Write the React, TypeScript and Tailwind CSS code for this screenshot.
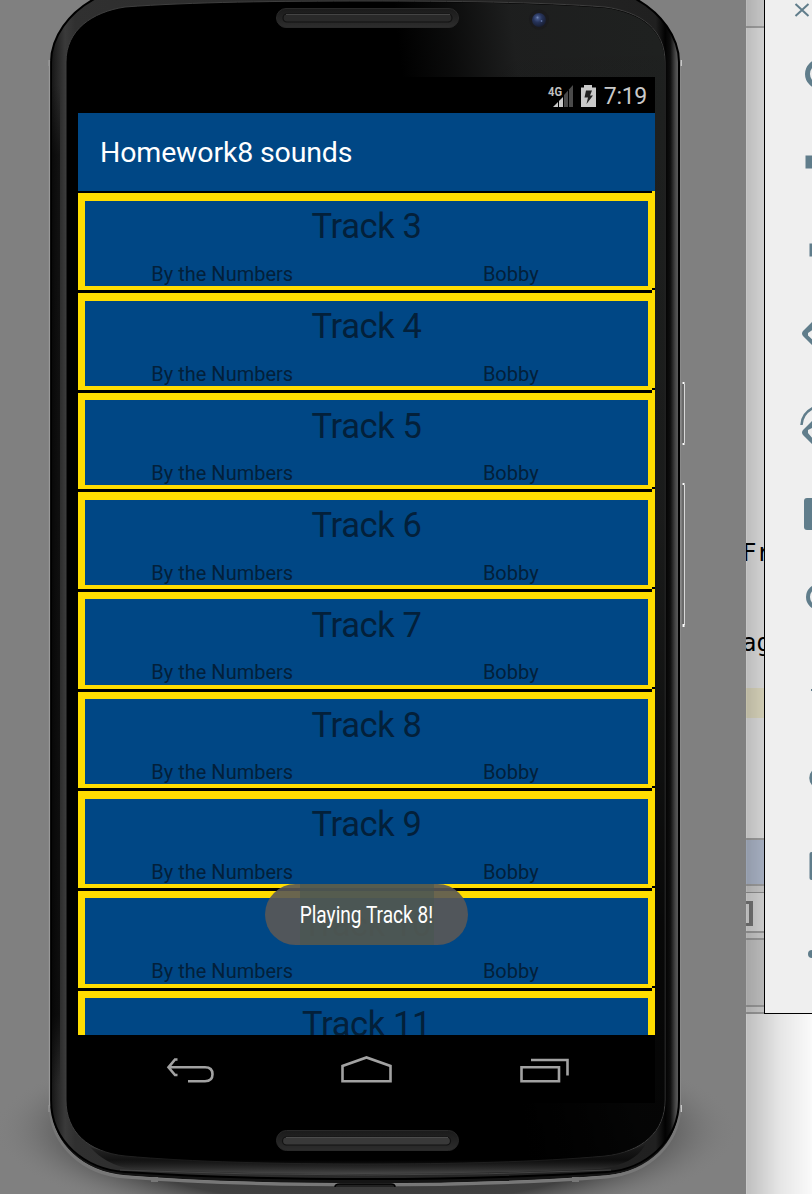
import React from "react";

const tracks = [3, 4, 5, 6, 7, 8, 9, 10, 11];

function PhoneBody() {
  return (
    <svg className="absolute left-0 top-0" width="746" height="1194" viewBox="0 0 746 1194">
      <defs>
        <linearGradient id="rim" x1="50" x2="681" y1="0" y2="0" gradientUnits="userSpaceOnUse">
          <stop offset="0" stopColor="#111" />
          <stop offset="0.008" stopColor="#202020" />
          <stop offset="0.024" stopColor="#3a3a3a" />
          <stop offset="0.04" stopColor="#303030" />
          <stop offset="0.96" stopColor="#202020" />
          <stop offset="0.975" stopColor="#020202" />
          <stop offset="0.983" stopColor="#0e0e0e" />
          <stop offset="0.992" stopColor="#4d4d4d" />
          <stop offset="0.997" stopColor="#606060" />
          <stop offset="1" stopColor="#555" />
        </linearGradient>
        <linearGradient id="blotch" x1="0" x2="0" y1="0" y2="1">
          <stop offset="0" stopColor="#000" stopOpacity="0" />
          <stop offset="0.07" stopColor="#000" stopOpacity="0.6" />
          <stop offset="0.93" stopColor="#000" stopOpacity="0.7" />
          <stop offset="1" stopColor="#000" stopOpacity="0" />
        </linearGradient>
        <linearGradient id="glossX" x1="400" x2="655" y1="60" y2="30" gradientUnits="userSpaceOnUse">
          <stop offset="0" stopColor="#1f2020" stopOpacity="0" />
          <stop offset="0.2" stopColor="#1f2020" stopOpacity="0.35" />
          <stop offset="0.45" stopColor="#1f2020" stopOpacity="0.95" />
          <stop offset="1" stopColor="#1f2120" />
        </linearGradient>
        <linearGradient id="glossFade" x1="0" x2="0" y1="0" y2="1">
          <stop offset="0" stopColor="#000" stopOpacity="0" />
          <stop offset="0.45" stopColor="#000" stopOpacity="0.15" />
          <stop offset="0.8" stopColor="#000" stopOpacity="0.75" />
          <stop offset="1" stopColor="#000" stopOpacity="0.85" />
        </linearGradient>
        <linearGradient id="slot" x1="0" x2="0" y1="0" y2="1">
          <stop offset="0" stopColor="#1b1b1b" />
          <stop offset="0.5" stopColor="#232323" />
          <stop offset="1" stopColor="#2d2d2d" />
        </linearGradient>
        <radialGradient id="lens" cx="0.4" cy="0.35" r="0.7">
          <stop offset="0" stopColor="#50659a" />
          <stop offset="0.45" stopColor="#26335a" />
          <stop offset="1" stopColor="#161b2c" />
        </radialGradient>
        <radialGradient id="shadow" cx="0.5" cy="0.5" r="0.5">
          <stop offset="0" stopColor="#2a2a2a" />
          <stop offset="0.72" stopColor="#3a3a3a" stopOpacity="0.9" />
          <stop offset="0.86" stopColor="#555" stopOpacity="0.4" />
          <stop offset="1" stopColor="#808080" stopOpacity="0" />
        </radialGradient>
        <linearGradient id="bottomRim" x1="0" x2="0" y1="1140" y2="1176" gradientUnits="userSpaceOnUse">
          <stop offset="0" stopColor="#000" stopOpacity="0" />
          <stop offset="0.55" stopColor="#000" stopOpacity="0.6" />
          <stop offset="1" stopColor="#555" />
        </linearGradient>
      </defs>
      <ellipse cx="366" cy="1130" rx="372" ry="104" fill="url(#shadow)" />
      <path d="M50 62V1108C52 1144 82 1172 125 1176C200 1182 280 1184 366 1184C452 1184 530 1182 607 1176C650 1172 678 1144 680 1108V62" fill="#151515" stroke="#8c8c8c" strokeWidth="1.6" />
      <path d="M50 1108C52 1144 82 1174 125 1177C200 1183 280 1185 366 1185C452 1185 530 1183 607 1177C650 1172 678 1144 680 1108" fill="none" stroke="#777" strokeWidth="3" />
      <path d="M51 62C51 38 68 12 98 -3H632C662 12 679 38 679 62V1100C679 1142 645 1169 607 1172C530 1177 452 1179 366 1179C280 1179 200 1177 125 1172C85 1169 51 1142 51 1100Z" fill="url(#rim)" stroke="#000" strokeWidth="2" />
      <rect x="52" y="85" width="8" height="1000" fill="url(#blotch)" />
      <path d="M66 62C66 30 92 12 125 7C190 2 280 1 366 1C452 1 540 2 605 7C642 12 665 30 665 62V1100C665 1132 642 1152 605 1156C540 1162 452 1164 366 1164C280 1164 190 1162 125 1156C88 1152 66 1132 66 1100Z" fill="#000" stroke="#3f3f3f" strokeWidth="1" />
      <path d="M370 2C452 2 540 3 605 8C642 13 664.500 31 664.500 62V1100C664.500 1132 642 1151 605 1155C540 1160 452 1162 370 1162Z" fill="url(#glossX)" />
      <path d="M370 2C452 2 540 3 605 8C642 13 664.500 31 664.500 62V1100C664.500 1132 642 1151 605 1155C540 1160 452 1162 370 1162Z" fill="url(#glossFade)" />
      <path d="M90 1147Q110 1154 150 1156Q366 1163 585 1156Q625 1154 645 1145Q635 1164 600 1169Q366 1179 130 1169Q105 1164 90 1147Z" fill="url(#bottomRim)" />
      <path d="M120 1170Q366 1180 611 1170" fill="none" stroke="#444" strokeWidth="1" />
      <path d="M49.500 60V1106M49 60v6M49 1105v7" stroke="#999" strokeWidth="1.200" />
      <path d="M681.300 60v6M681.300 1105v7" stroke="#ccc" strokeWidth="1.300" />
      <g>
        <rect x="276.500" y="8.500" width="182" height="19" rx="9.500" fill="url(#slot)" stroke="#292929" />
        <rect x="283" y="14" width="169" height="8" rx="4" fill="#292929" stroke="#121212" strokeWidth="1.200" />
        <path d="M286 14.500H450" stroke="#444" />
        <rect x="276.500" y="1130.500" width="182" height="20" rx="10" fill="url(#slot)" stroke="#292929" />
        <rect x="282.500" y="1137" width="168" height="8" rx="4" fill="#393939" stroke="#121212" strokeWidth="1.200" />
        <path d="M286 1137.500H448" stroke="#4c4c4c" />
      </g>
      <circle cx="539" cy="19.500" r="10" fill="#1b1b1d" />
      <circle cx="539" cy="20" r="7" fill="url(#lens)" />
      <circle cx="537.500" cy="17.500" r="1" fill="#6f83b0" />
      <circle cx="541.500" cy="21" r="0.900" fill="#5d70a0" />
      <path d="M683 382V445M683 483V627" stroke="#6b6b6b" strokeWidth="2" />
      <path d="M684.500 384V443M684.500 485V625" stroke="#d8d8d8" strokeWidth="1" />
      <path d="M683.500 382v2M683.500 443v2M683.500 483v2M683.500 624v3" stroke="#fff" strokeWidth="2" />
      <path d="M335 1187Q335 1184 340 1184H391Q395 1184 395 1187" fill="#222" stroke="#000" strokeWidth="1.500" />
      <rect x="151" y="1177" width="7" height="5" fill="#777" />
      <rect x="572" y="1177" width="7" height="5" fill="#777" />
    </svg>
  );
}

function StatusBar() {
  return (
    <div className="flex h-9 shrink-0 items-center justify-end bg-black pr-2">
      <svg width="50" height="30" viewBox="0 0 50 30" className="mr-[7px] mt-0.5">
        <text x="1" y="15" fontSize="13.500" fontWeight="700" fill="#bfbfbf" fontFamily="Roboto, sans-serif" textLength="14" lengthAdjust="spacingAndGlyphs">4G</text>
        <path d="M6 26L16 16V26Z" fill="#c9c9c9" />
        <path d="M17 26V14L26 4V26Z" fill="#4a4a4a" />
        <path d="M11.500 18V26M16.500 13V26M21.500 9V26" stroke="#000" strokeWidth="1" />
        <path d="M34 6.500H37V4H45V6.500H49V26H34Z" fill="#c9c9c9" />
        <path d="M39 9.500H45L43 14.500H46L39.500 23L41 16.500H37.500Z" fill="#222" />
      </svg>
      <span className="mt-[3px] text-[23px] leading-none tracking-[-0.3px] text-[#c9c9c9]">7:19</span>
    </div>
  );
}

function TrackRow({ number }: { number: number }) {
  return (
    <div className="relative h-[99.65px] shrink-0 border-b-[3px] border-black bg-[#ffdd00]">
      <div className="h-full pb-[4px] pl-[7px] pr-[7px] pt-[7.5px]">
        <div className="flex h-full flex-col items-center bg-[#004785] text-[#03203a]">
          <div className="mt-[5.5px] text-[34.5px] leading-[40px] tracking-[-0.4px]">Track {number}</div>
          <div className="mt-[15.5px] flex w-[577px] text-[20px] leading-6">
            <span className="flex-1 text-center">By the Numbers</span>
            <span className="flex-1 text-center">Bobby</span>
          </div>
        </div>
      </div>
      <div className="absolute -bottom-[3px] right-0 h-[3px] w-[3px] bg-[#ffdd00]" />
      <div className="absolute bottom-0 right-0 h-[2px] w-[3px] bg-black" />
    </div>
  );
}

function NavBar() {
  return (
    <div className="flex h-[68px] shrink-0 bg-black">
      <svg width="577" height="68" viewBox="78 1035 577 68" fill="none" stroke="#a2a2a2" strokeWidth="2.600">
        <path d="M168 1067.300H205Q212.500 1067.300 212.500 1074.200Q212.500 1081.200 205 1081.200H188M177.500 1059.500H175L168.500 1067.300L175 1075H177.500" />
        <path d="M342.500 1081.200V1066L366.500 1057.500L390.500 1066V1081.200Z" />
        <path d="M521.500 1067.200H559V1081.200H521.500ZM531 1060H567.500V1075.500" />
      </svg>
    </div>
  );
}

function Toolbar() {
  return (
    <div className="relative z-10 h-[1014px] w-12 shrink-0 border-b border-l border-black bg-[#efefef]">
      <svg width="47" height="1013" viewBox="765 0 47 1013" fill="none" stroke="#607d8b">
        <path d="M795.500 4L808.500 16M808.500 4L795.500 16" strokeWidth="2" />
        <circle cx="820" cy="74" r="12.500" strokeWidth="5" />
        <path d="M805.500 155.500H812V168.500H805.500ZM809.500 243.500H812V256.500H809.500Z" fill="#607d8b" stroke="none" />
        <path d="M814 320L803 331Q801 333.500 803 336L814 347V341L808 335.500V333L814 329Z" fill="#607d8b" stroke="none" />
        <path d="M814 419L803 430Q801 432.500 803 435L814 446V440L808 433V430L814 427Z" fill="#607d8b" stroke="none" />
        <path d="M801.500 425Q802 413 814 407.500" strokeWidth="2.500" />
        <rect x="804" y="498" width="30" height="32" rx="3" fill="#607d8b" stroke="none" />
        <circle cx="819" cy="597" r="11" strokeWidth="4" />
        <path d="M811 690H814" strokeWidth="2" />
        <circle cx="820" cy="778" r="9" strokeWidth="3.500" />
        <rect x="809.500" y="852" width="20" height="28" rx="2" fill="#607d8b" stroke="none" />
        <circle cx="812" cy="954" r="4" fill="#607d8b" stroke="none" />
      </svg>
    </div>
  );
}

function EditorSliver() {
  return (
    <div className="relative flex h-[1014px] w-[18px] shrink-0 flex-col overflow-hidden bg-white font-['DejaVu_Sans_Mono',monospace] text-[24px] text-black">
      <div className="h-[26px] shrink-0 bg-[#ededed]" />
      <div className="h-[2px] shrink-0 bg-[#b9b9b9]" />
      <div className="h-[511px] shrink-0 bg-[#fcfcfc]" />
      <div className="h-[30px] shrink-0 whitespace-pre bg-[#fcfcfc] leading-[29px]"><span className="-ml-[4px]">Fr</span></div>
      <div className="h-[60px] shrink-0 bg-[#fcfcfc]" />
      <div className="h-[30px] shrink-0 whitespace-pre bg-[#fcfcfc] leading-[29px]"><span className="-ml-[4px]">ag</span></div>
      <div className="h-[29px] shrink-0 bg-[#fcfcfc]" />
      <div className="h-[30px] shrink-0 bg-[#faf5d8]" />
      <div className="h-[120px] shrink-0 bg-[#fcfcfc]" />
      <div className="h-[48px] shrink-0 border-y-2 border-[#b5b5b5] bg-[#c5d0e5]" />
      <div className="h-[7px] shrink-0 border-b border-[#a5a5a5] bg-[#e5e5e5]" />
      <div className="h-[38px] shrink-0 bg-[#f4f4f4] pt-2">
        <div className="h-[25px] w-[7px] border-y-[3px] border-r-[4px] border-[#858585]" />
      </div>
      <div className="h-[9px] shrink-0 border-y-2 border-[#b0b0b0] bg-[#e8e8e8]" />
      <div className="h-[65px] shrink-0 bg-[#dedede]" />
      <div className="h-[9px] shrink-0 border-y-2 border-[#b0b0b0] bg-[#e8e8e8]" />
    </div>
  );
}

export default function App() {
  return (
    <div className="relative flex h-[1194px] w-[812px] items-start overflow-hidden bg-white font-['Roboto',sans-serif]">
      <div className="relative h-[1194px] w-[746px] shrink-0 overflow-hidden bg-[#808080] pl-[78px] pt-[77px]">
        <PhoneBody />
        <div className="relative flex h-[1026px] w-[577px] flex-col overflow-hidden bg-black">
          <StatusBar />
          <div className="flex h-[78px] shrink-0 items-center bg-[#004785] pl-[22px] pt-[3px] text-[28.500px] tracking-[-0.15px] text-white">Homework8 sounds</div>
          <div className="flex h-[2px] shrink-0 justify-end"><div className="h-full w-[3px] bg-[#ffdd00]" /></div>
          <div className="relative flex h-[842px] shrink-0 flex-col overflow-hidden pt-[0.4px]">
            {tracks.map((n) => <TrackRow key={n} number={n} />)}
          </div>
          <NavBar />
          <div className="absolute left-[187px] top-[807px] flex h-[61px] w-[203px] justify-center overflow-hidden rounded-full bg-[#5a5857]/90">
            <div className="flex h-full w-[134px] items-center justify-center bg-[#475650]/60">
              <span className="mt-[3px] origin-center scale-x-[0.83] whitespace-nowrap text-[23px] text-white">Playing Track 8!</span>
            </div>
          </div>
        </div>
      </div>
      <EditorSliver />
      <Toolbar />
      <div className="absolute left-[746px] top-0 h-[1194px] w-[66px] border-l border-black/20 bg-linear-to-r from-black/25 via-black/10 to-black/2" />
    </div>
  );
}
